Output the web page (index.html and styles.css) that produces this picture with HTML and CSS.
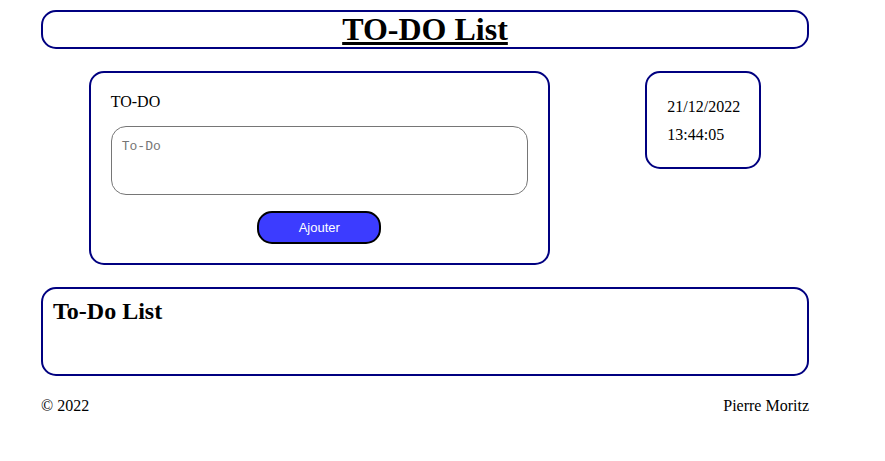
FILE: index.html
```html
<!DOCTYPE html>
<html lang="fr">
<head>
<meta charset="utf-8">
<title>TO-DO List</title>
<link rel="stylesheet" href="styles.css">
</head>
<body>
<div class="page">
  <header class="box header"><h1 class="title">TO-DO List</h1></header>
  <div class="row">
    <form class="box form" onsubmit="return false">
      <p class="label">TO-DO</p>
      <textarea class="input" placeholder="To-Do"></textarea>
      <div class="actions"><button class="btn" type="submit">Ajouter</button></div>
    </form>
    <div class="box clock">
      <div>21/12/2022</div>
      <div>13:44:05</div>
    </div>
  </div>
  <section class="box list"><h2 class="list-title">To-Do List</h2></section>
  <footer class="footer"><span>© 2022</span><span>Pierre Moritz</span></footer>
</div>
</body>
</html>
```
FILE: styles.css
```css
* { box-sizing: border-box; }
html, body { margin: 0; padding: 0; background: #fff; }
body { font-family: "Liberation Serif", "Times New Roman", serif; font-size: 16px; color: #000; }
.page { width: 768px; margin-left: 41px; padding-top: 10px; }
.box { border: 2px solid #000080; border-radius: 15px; background: #fff; }
.header { height: 39px; padding-bottom: 2px; display: flex; align-items: center; justify-content: center; }
.title { margin: 0; font-size: 32px; font-weight: bold; text-decoration: underline; line-height: 34px; }
.row { display: flex; justify-content: space-around; align-items: flex-start; margin-top: 22px; }
.form { width: 461px; height: 194px; padding: 20px 20px 0; display: flex; flex-direction: column; }
.label { margin: 0 0 15px; line-height: 18px; }
.input { width: 100%; height: 69px; border: 1px solid #767676; border-radius: 15px; padding: 12px 10px; font-family: "Liberation Mono", "DejaVu Sans Mono", monospace; font-size: 13px; resize: none; outline: none; }
.input::placeholder { color: #757575; }
.actions { display: flex; justify-content: center; margin-top: 16px; }
.btn { width: 124px; height: 33px; border: 2px solid #000; border-radius: 15px; background: #3c3cff; color: #fff; font-family: "Liberation Sans", Arial, sans-serif; font-size: 13px; }
.clock { width: 116px; height: 98px; padding: 25px 0 0 20px; display: flex; flex-direction: column; gap: 10px; line-height: 18px; }
.list { margin-top: 22px; height: 89px; padding: 8px 10px; }
.list-title { margin: 0; font-size: 24px; font-weight: bold; line-height: 28px; }
.footer { display: flex; justify-content: space-between; margin-top: 21px; line-height: 18px; }
```
